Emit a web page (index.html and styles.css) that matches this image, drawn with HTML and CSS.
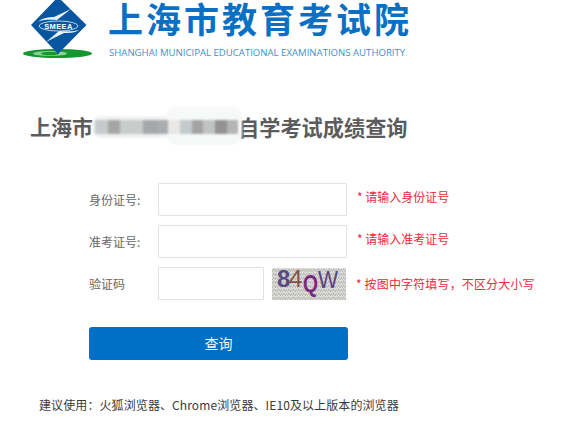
FILE: index.html
```html
<!DOCTYPE html>
<html lang="zh-CN">
<head>
<meta charset="utf-8">
<title>上海市教育考试院</title>
<link rel="stylesheet" href="styles.css">
</head>
<body>
<header class="brand">
  <svg class="logo" width="76" height="60" viewBox="0 0 76 60">
    <ellipse cx="34.500" cy="53.500" rx="34.500" ry="4.500" fill="#16962f"/>
    <ellipse cx="27" cy="53.500" rx="17" ry="2.600" fill="#8fd09a"/>
    <ellipse cx="27" cy="53.500" rx="9" ry="1.700" fill="#16962f"/>
    <polygon points="35,-3 63.500,25 35,54 8,25" fill="#07569f"/>
    <path d="M15 22 C18 18 27 17 31 17 L48 9 L34 20 C28 20 20 19 15 22Z" fill="#e8f0f8"/>
    <path d="M56 30 C52 33 46 33 41 33 L23 42 L36 31 C42 31 50 32 56 30Z" fill="#e8f0f8"/>
    <ellipse cx="35.500" cy="26" rx="19.500" ry="5" fill="#07569f" stroke="#e8f0f8" stroke-width="0.800"/>
    <text class="logo-text" x="35.500" y="29">SMEEA</text>
  </svg>
  <div class="brand-text">
    <div class="brand-cn">上海市教育考试院</div>
    <div class="brand-en">SHANGHAI MUNICIPAL EDUCATIONAL EXAMINATIONS AUTHORITY</div>
  </div>
</header>

<h1 class="heading">
  <span>上海市</span>
  <svg class="mosaic" width="154" height="42" viewBox="0 0 154 42">
    <rect x="2" y="11" width="80" height="22" rx="9" fill="#f0f2f2"/>
    <rect x="76" y="2" width="76" height="38" rx="10" fill="#f7f8f8"/>
    <rect x="5" y="15" width="13" height="14" fill="#c6cacb"/>
    <rect x="18" y="15" width="12" height="14" fill="#a6a6a6"/>
    <rect x="30" y="15" width="23" height="14" fill="#c9cccb"/>
    <rect x="53" y="15" width="14" height="14" fill="#a5a7aa"/>
    <rect x="67" y="15" width="11" height="14" fill="#a9adb0"/>
    <rect x="78" y="15" width="12" height="14" fill="#eae8e6"/>
    <rect x="90" y="15" width="12" height="14" fill="#c4cbce"/>
    <rect x="102" y="15" width="11" height="14" fill="#a5a3a2"/>
    <rect x="113" y="15" width="12" height="14" fill="#c1c4c4"/>
    <rect x="125" y="15" width="12" height="14" fill="#929392"/>
    <rect x="137" y="15" width="11" height="14" fill="#b5b5b3"/>
  </svg>
  <span class="heading-tail">自学考试成绩查询</span>
</h1>

<form class="form">
  <div class="row">
    <label class="label">身份证号:</label>
    <input class="field" type="text">
    <span class="hint">* 请输入身份证号</span>
  </div>
  <div class="row">
    <label class="label">准考证号:</label>
    <input class="field" type="text">
    <span class="hint">* 请输入准考证号</span>
  </div>
  <div class="row">
    <label class="label">验证码</label>
    <input class="field field-short" type="text">
    <svg class="captcha" width="74" height="32" viewBox="0 0 74 32">
      <defs>
        <pattern id="noise" width="5" height="4" patternUnits="userSpaceOnUse">
          <rect width="5" height="4" fill="#dcdcd8"/>
          <path d="M0 4 L2 1 M3 4 L5 1 M1 1 L4 3" stroke="#a8a8a4" stroke-width="0.700"/>
        </pattern>
      </defs>
      <rect width="74" height="32" fill="url(#noise)"/>
      <text class="cap cap-8" x="5" y="19">8</text>
      <text class="cap cap-4" x="17" y="19">4</text>
      <text class="cap cap-q" x="31" y="24" textLength="15" lengthAdjust="spacingAndGlyphs">Q</text>
      <text class="cap cap-w" x="46" y="20" textLength="20" lengthAdjust="spacingAndGlyphs">W</text>
    </svg>
    <span class="hint">* 按图中字符填写，不区分大小写</span>
  </div>
  <button class="submit" type="button">查询</button>
</form>

<p class="note">建议使用：火狐浏览器、Chrome浏览器、IE10及以上版本的浏览器</p>
</body>
</html>
```

FILE: styles.css
```css
* {
  box-sizing: border-box;
}

html, body {
  margin: 0;
  padding: 0;
  background: #fff;
  overflow: hidden;
}

body {
  height: 425px;
  font-family: "Noto Sans CJK SC", "Noto Sans", sans-serif;
  color: #666;
}

.brand {
  display: flex;
  align-items: flex-start;
  height: 62px;
  padding-left: 23px;
}

.logo {
  flex: none;
  overflow: hidden;
}

.logo-text {
  font-family: "Liberation Sans", sans-serif;
  font-size: 7.500px;
  font-weight: 700;
  letter-spacing: 0.400px;
  text-anchor: middle;
  fill: #fff;
}

.brand-text {
  margin-left: 9px;
}

.brand-cn {
  font-size: 35px;
  line-height: 36px;
  letter-spacing: 3px;
  font-weight: 700;
  color: #0a70c4;
  white-space: nowrap;
}

.brand-en {
  margin-top: 11px;
  padding-left: 1px;
  font-family: "Open Sans", sans-serif;
  font-size: 9.600px;
  line-height: 12px;
  color: #3f8fd2;
  white-space: nowrap;
}

.heading {
  display: flex;
  align-items: center;
  height: 42px;
  margin: 43px 0 0 30px;
  font-size: 21px;
  font-weight: 700;
  color: #5c5c5c;
  white-space: nowrap;
}

.mosaic {
  flex: none;
  margin-left: -3px;
  filter: blur(0.800px);
}

.heading-tail {
  margin-left: -6px;
  font-size: 21.200px;
}

.form {
  margin: 36px 0 0 89px;
}

.row {
  display: flex;
  align-items: center;
  height: 33px;
  margin-bottom: 9px;
}

.row:nth-child(3) {
  margin-bottom: 27px;
}

.label {
  flex: none;
  width: 69px;
  font-size: 12px;
  color: #666;
}

.field {
  flex: none;
  width: 189px;
  height: 33px;
  padding: 0 8px;
  background: #fff;
  border: 1px solid #e2e2e2;
  border-radius: 1px;
  outline: none;
}

.field-short {
  width: 106px;
}

.captcha {
  flex: none;
  margin-left: 8px;
  margin-right: -1px;
  overflow: visible;
}

.cap {
  font-family: "Liberation Sans", sans-serif;
  font-size: 24px;
}

.cap-8 {
  fill: #5a4a86;
  font-weight: 700;
}

.cap-4 {
  fill: #8a5040;
}

.cap-q {
  fill: #7a2a7e;
  font-weight: 700;
}

.cap-w {
  fill: #5d3f85;
}

.hint {
  flex: none;
  margin-left: 10px;
  margin-top: -6px;
  font-size: 12px;
  line-height: 16px;
  color: #f0283a;
  white-space: nowrap;
}

.row:nth-child(3) .hint {
  margin-left: 11px;
  margin-top: 1px;
  letter-spacing: 0.150px;
}

.submit {
  display: block;
  width: 259px;
  height: 33px;
  padding: 0 0 2px;
  background: #0070c4;
  border: 0;
  border-radius: 3px;
  font-family: inherit;
  font-size: 14px;
  color: #f2f8fc;
}

.note {
  margin: 36px 0 0 39px;
  font-size: 12px;
  line-height: 18px;
  letter-spacing: 0.100px;
  color: #3a3a3a;
  white-space: nowrap;
}
```
